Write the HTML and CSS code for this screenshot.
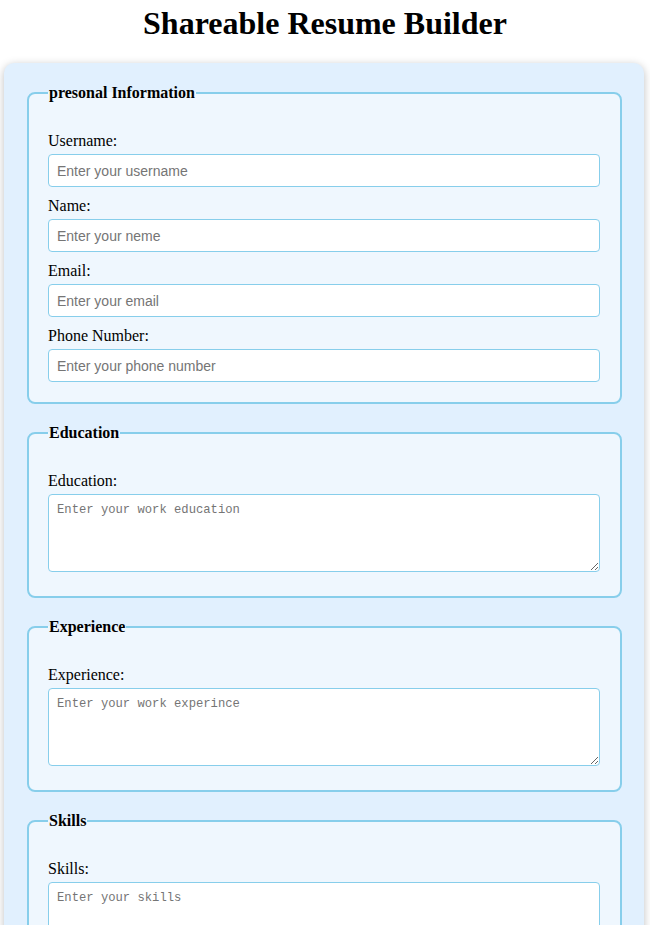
FILE: index.html
```html
<!DOCTYPE html>
<html lang="en">
<head>
<meta charset="UTF-8">
<title>Shareable Resume Builder</title>
<link rel="stylesheet" href="styles.css">
</head>
<body>
<h1 class="title">Shareable Resume Builder</h1>
<div class="container">
  <form class="resume-form">
    <fieldset class="section">
      <legend class="section-title">presonal Information</legend>
      <label class="field-label" for="username">Username:</label>
      <input class="field-input" type="text" id="username" placeholder="Enter your username">
      <label class="field-label" for="name">Name:</label>
      <input class="field-input" type="text" id="name" placeholder="Enter your neme">
      <label class="field-label" for="email">Email:</label>
      <input class="field-input" type="email" id="email" placeholder="Enter your email">
      <label class="field-label" for="phone">Phone Number:</label>
      <input class="field-input" type="tel" id="phone" placeholder="Enter your phone number">
    </fieldset>
    <fieldset class="section">
      <legend class="section-title">Education</legend>
      <label class="field-label" for="education">Education:</label>
      <textarea class="field-area" id="education" placeholder="Enter your work education"></textarea>
    </fieldset>
    <fieldset class="section">
      <legend class="section-title">Experience</legend>
      <label class="field-label" for="experience">Experience:</label>
      <textarea class="field-area" id="experience" placeholder="Enter your work experince"></textarea>
    </fieldset>
    <fieldset class="section">
      <legend class="section-title">Skills</legend>
      <label class="field-label" for="skills">Skills:</label>
      <textarea class="field-area" id="skills" placeholder="Enter your skills"></textarea>
    </fieldset>
    <button class="submit-btn" type="submit">Generate Resume</button>
  </form>
</div>
</body>
</html>
```
FILE: styles.css
```css
html, body {
  margin: 0;
  padding: 0;
  background: #ffffff;
  font-family: "Liberation Serif", "Times New Roman", serif;
  color: #000;
}

.title {
  font-size: 32px;
  font-weight: bold;
  text-align: center;
  margin: 5px 0 21px;
  line-height: 37px;
}

.container {
  width: 640px;
  box-sizing: border-box;
  margin: 0 auto 20px;
  padding: 21px 20px 20px 21px;
  background: #e1f0fe;
  border-radius: 10px;
  box-shadow: 0 2px 8px rgba(0, 0, 0, 0.25);
  margin-left: 4px;
}

.section {
  margin: 0 2px 20px;
  padding: 20px 20px 20px 19px;
  border: 2px solid #87ceeb;
  border-radius: 8px;
  background: #eff7fe;
}

.section-title {
  font-size: 16px;
  font-weight: bold;
  padding: 0 1px;
  margin-left: 0;
}

.field-label {
  display: block;
  font-size: 16px;
  line-height: 18px;
  margin: 10px 0 4px;
}

.field-input {
  display: inline-block;
  width: 100%;
  box-sizing: border-box;
  height: 33px;
  padding: 8px;
  border: 1px solid #87ceeb;
  border-radius: 4px;
  background: #fff;
  font-family: "Liberation Sans", Arial, sans-serif;
  font-size: 14px;
  margin: 0;
}

.field-input::placeholder {
  color: #757575;
}

.field-area {
  width: 100%;
  box-sizing: border-box;
  height: 78px;
  padding: 8px;
  border: 1px solid #87ceeb;
  border-radius: 4px;
  background: #fff;
  font-family: "Liberation Mono", "Courier New", monospace;
  font-size: 12.2px;
  line-height: 15px;
  margin: 0;
}

.field-area::placeholder {
  color: #757575;
}

.submit-btn {
  padding: 10px 20px;
  background: #87ceeb;
  border: none;
  border-radius: 4px;
  font-size: 16px;
}
```
